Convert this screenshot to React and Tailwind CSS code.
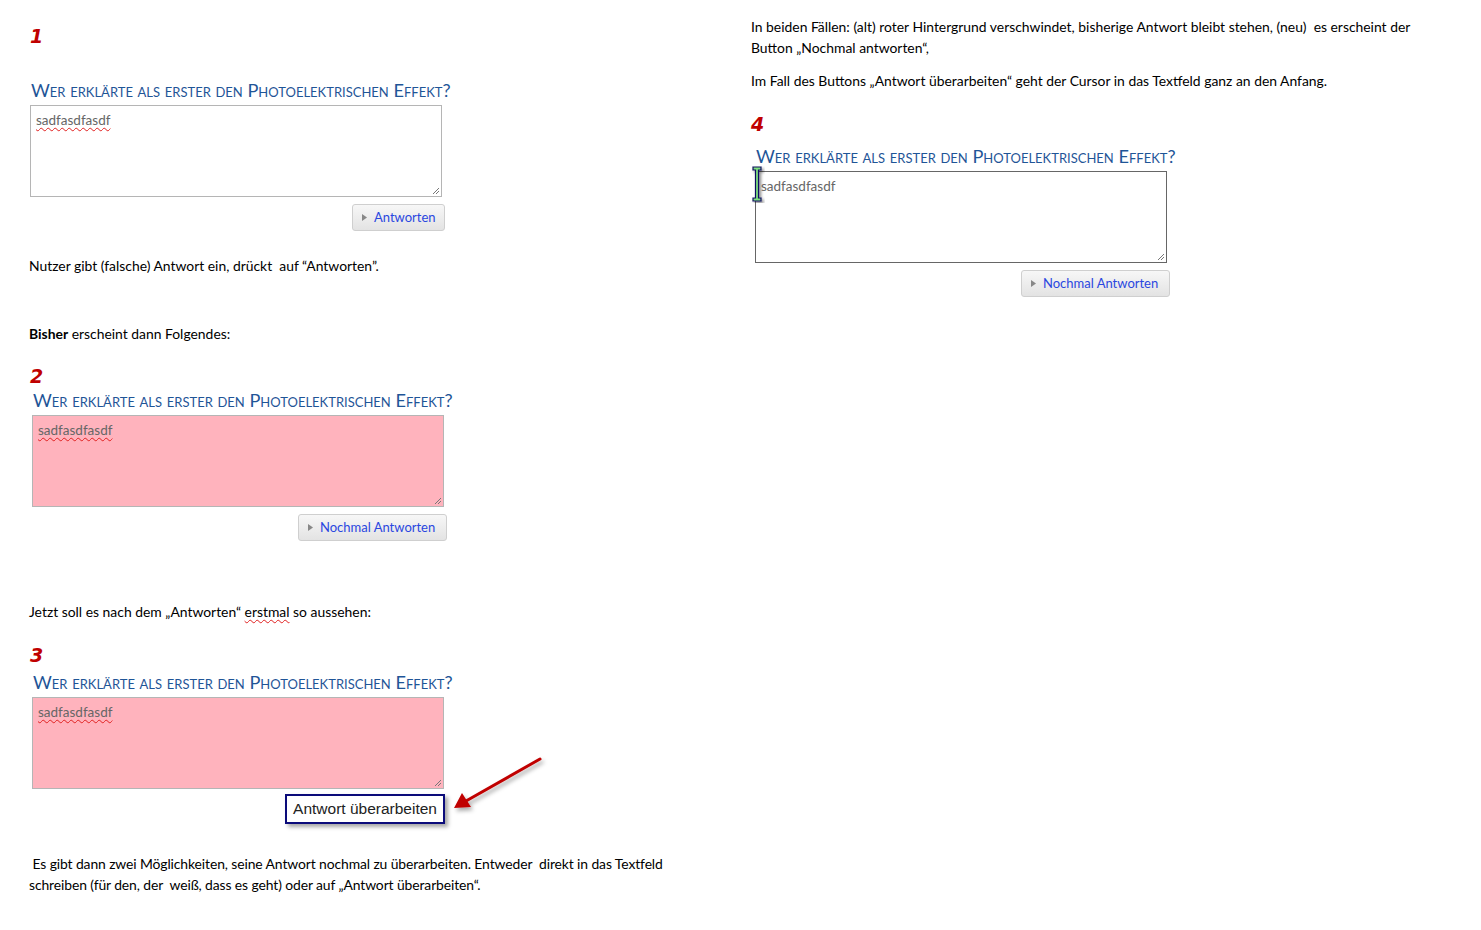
import React from 'react'

const body = { fontFamily: 'Lato, "Liberation Sans", sans-serif' }
const head = { fontFamily: 'Lato, "Open Sans", sans-serif', fontVariant: 'small-caps' }
const num = { fontFamily: '"DejaVu Sans", "Liberation Sans", sans-serif' }

const Num = ({ n, className = '' }) => (
  <div className={`h-[22px] leading-[22px] text-[19px] font-bold italic text-[#c00000] ${className}`} style={num}>
    {n}
  </div>
)

const Heading = ({ className = '' }) => (
  <div className={`h-[22px] leading-[22px] text-[18.2px] text-[#1f5597] whitespace-nowrap ${className}`} style={head}>
    Wer erklärte als erster den Photoelektrischen Effekt?
  </div>
)

const Grip = () => (
  <svg className="absolute right-[1px] bottom-[1px]" width="8" height="8" viewBox="0 0 8 8">
    <path d="M7 1 L1 7 M7 4 L4 7" stroke="#777" strokeWidth="1" />
  </svg>
)

const Field = ({ pink, focus, className = '' }) => (
  <div
    className={`relative w-[412px] h-[92px] border ${focus ? 'border-[#666]' : 'border-[#b5b5b5]'} ${pink ? 'bg-[#ffb3bd]' : 'bg-white'} px-[5px] pt-[1px] ${className}`}
  >
    <span
      className={`text-[13.5px] leading-[16px] text-[#666] ${focus ? '' : 'underline decoration-wavy decoration-[#e02020] decoration-1 underline-offset-2'}`}
      style={body}
    >
      sadfasdfasdf
    </span>
    <Grip />
  </div>
)

const Btn = ({ label, w }) => (
  <div
    className="h-[27px] flex items-center gap-[7px] pl-[9px] rounded-[3px] border border-[#cfcfcf] bg-gradient-to-b from-[#f7f7f7] to-[#e3e3e3] text-[13px] text-[#2a47e0]"
    style={{ ...body, width: w }}
  >
    <svg width="5" height="7" viewBox="0 0 5 7">
      <path d="M0 0 L5 3.5 L0 7 Z" fill="#888" />
    </svg>
    <span>{label}</span>
  </div>
)

const P = ({ children, className = '' }) => (
  <p className={`text-[13.9px] leading-[21px] text-black ${className}`} style={body}>
    {children}
  </p>
)

export default function App() {
  return (
    <div className="w-[1481px] h-[930px] bg-white flex relative overflow-hidden">
      {/* left column */}
      <div className="w-[744px] shrink-0 pl-[29px] flex flex-col">
        <Num n="1" className="mt-[25px] ml-[1px]" />
        <Heading className="mt-[32px] ml-[2px]" />
        <Field className="mt-[4px] ml-[1px]" />
        <div className="w-[416px] flex justify-end mt-[7px]">
          <Btn label="Antworten" w={93} />
        </div>
        <P className="mt-[24px]">Nutzer gibt (falsche) Antwort ein, drückt&nbsp; auf “Antworten”.</P>
        <P className="mt-[47px]"><b>Bisher</b> erscheint dann Folgendes:</P>

        <Num n="2" className="mt-[21px] ml-[1px]" />
        <Heading className="mt-[2px] ml-[4px]" />
        <Field pink className="mt-[4px] ml-[3px]" />
        <div className="w-[418px] flex justify-end mt-[7px]">
          <Btn label="Nochmal Antworten" w={149} />
        </div>

        <P className="mt-[60px]">
          Jetzt soll es nach dem „Antworten“{' '}
          <span className="underline decoration-wavy decoration-[#e02020] decoration-1 underline-offset-2">erstmal</span> so aussehen:
        </P>

        <Num n="3" className="mt-[22px] ml-[1px]" />
        <Heading className="mt-[5px] ml-[4px]" />
        <Field pink className="mt-[4px] ml-[3px]" />
        <div className="w-[416px] flex justify-end mt-[5px]">
          <div
            className="w-[160px] h-[30px] border-2 border-[#0b0b7a] bg-white flex items-center justify-center text-[15.5px] text-[#222] shadow-[3px_3px_4px_rgba(0,0,0,0.35)]"
            style={{ fontFamily: '"Liberation Sans", Arial, sans-serif' }}
          >
            Antwort überarbeiten
          </div>
        </div>

        <P className="mt-[29px] tracking-[-0.1px]">
          &nbsp;Es gibt dann zwei Möglichkeiten, seine Antwort nochmal zu überarbeiten. Entweder&nbsp; direkt in das Textfeld
          <br />
          schreiben (für den, der&nbsp; weiß, dass es geht) oder auf „Antwort überarbeiten“.
        </P>
      </div>

      {/* right column */}
      <div className="flex-1 flex flex-col">
        <P className="mt-[16px] ml-[7px]">
          In beiden Fällen: (alt) roter Hintergrund verschwindet, bisherige Antwort bleibt stehen, (neu)&nbsp; es erscheint der
          <br />
          Button „Nochmal antworten“,
        </P>
        <P className="mt-[12px] ml-[7px]">Im Fall des Buttons „Antwort überarbeiten“ geht der Cursor in das Textfeld ganz an den Anfang.</P>

        <Num n="4" className="mt-[22px] ml-[7px]" />
        <Heading className="mt-[10px] ml-[12px]" />
        <div className="relative mt-[4px] ml-[11px] w-[412px]">
          <Field focus />
          <svg className="absolute left-[-4px] top-[-5px]" width="15" height="37" viewBox="0 0 15 37">
            <defs>
              <filter id="sh" x="-50%" y="-20%" width="200%" height="150%">
                <feDropShadow dx="2" dy="2" stdDeviation="1.5" floodColor="#000" floodOpacity="0.45" />
              </filter>
            </defs>
            <path
              d="M2 1 H10 V4 H7.5 V32 H10 V35 H2 V32 H4.5 V4 H2 Z"
              fill="#7ee07e"
              stroke="#101060"
              strokeWidth="1.2"
              filter="url(#sh)"
            />
          </svg>
        </div>
        <div className="w-[426px] flex justify-end mt-[7px]">
          <Btn label="Nochmal Antworten" w={149} />
        </div>
      </div>

      {/* red arrow */}
      <svg className="absolute left-[448px] top-[752px]" width="100" height="64" viewBox="0 0 100 64">
        <defs>
          <filter id="ash" x="-20%" y="-20%" width="150%" height="160%">
            <feDropShadow dx="2" dy="3" stdDeviation="2" floodColor="#000" floodOpacity="0.35" />
          </filter>
        </defs>
        <g filter="url(#ash)">
          <path d="M92 7 L18 49" stroke="#c00000" strokeWidth="3" strokeLinecap="round" />
          <path d="M6 56 L14 41 L23 55 Z" fill="#c00000" />
        </g>
      </svg>
    </div>
  )
}
